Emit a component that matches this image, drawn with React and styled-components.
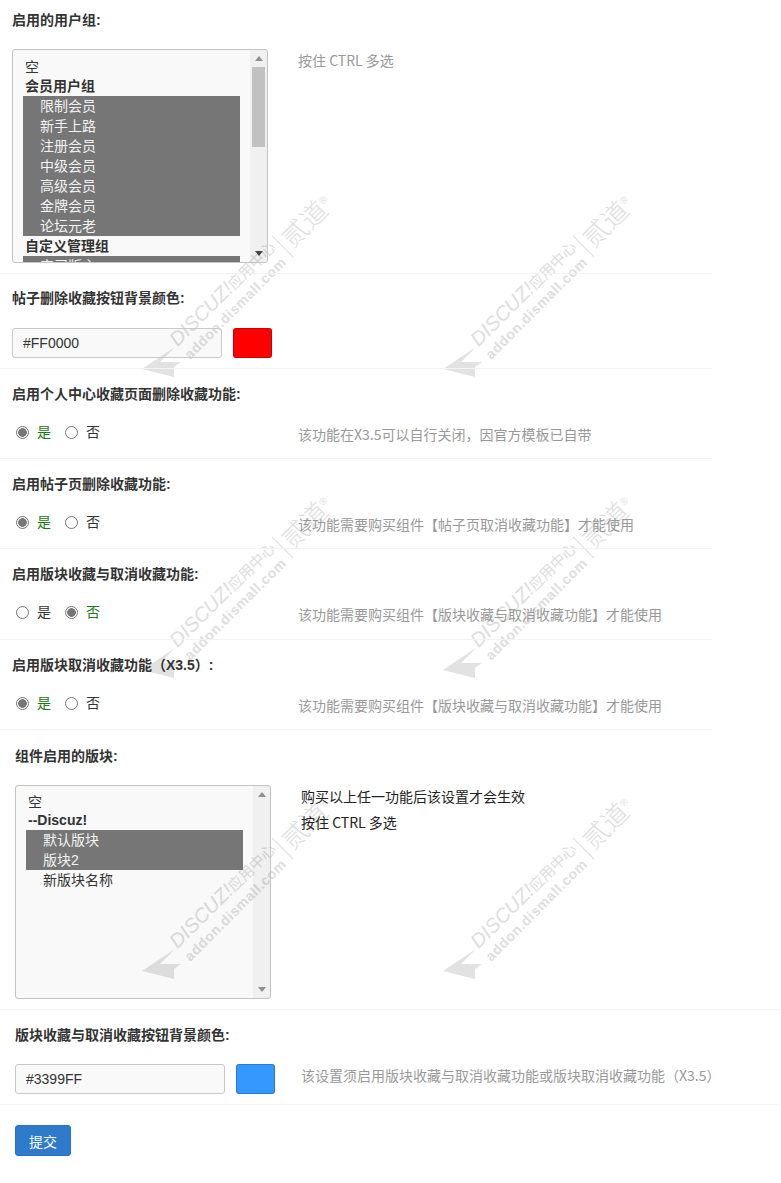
import React from "react";
import styled, { createGlobalStyle } from "styled-components";

const GlobalStyle = createGlobalStyle`
  html, body {
    margin: 0;
    padding: 0;
    background: #fff;
  }
  body {
    font-family: "Liberation Sans", "Noto Sans CJK SC", sans-serif;
    font-size: 14px;
    color: #333;
  }
`;

const Page = styled.div`
  position: relative;
  isolation: isolate;
  width: 781px;
  height: 1183px;
  overflow: hidden;
`;

const Section = styled.section`
  width: ${(props) => (props.$wide ? "100%" : "712px")};
  padding: ${(props) => props.$top ?? 15}px 0 ${(props) => props.$bottom ?? 14}px ${(props) => props.$left ?? 12}px;
  border-bottom: 1px solid #f3f3f3;
  box-sizing: border-box;
`;

const Title = styled.h4`
  margin: 0 0 ${(props) => props.$gap ?? 18}px;
  font-size: 14px;
  line-height: 20px;
  font-weight: 700;
  color: #333;
`;

const Row = styled.div`
  display: grid;
  grid-template-columns: 286px 1fr;
  align-items: start;
`;

const Hint = styled.div`
  font-family: "Noto Sans CJK SC", sans-serif;
  font-size: 14px;
  line-height: 20px;
  color: ${(props) => (props.$dark ? "#222" : "#999")};
  padding-top: ${(props) => props.$offset ?? 0}px;
  white-space: nowrap;
`;

const HintStack = styled.div`
  display: flex;
  flex-direction: column;
  gap: 6px;
  padding-top: 1px;
`;

const ListBox = styled.div`
  display: flex;
  justify-content: space-between;
  width: 256px;
  height: 214px;
  box-sizing: border-box;
  border: 1px solid #c4c4c4;
  border-radius: 3px;
  background: rgba(0, 0, 0, 0.025);
  overflow: hidden;
`;

const Options = styled.div`
  width: 217px;
  padding: ${(props) => props.$padTop}px 0 0 10px;
  color: #333;
`;

const Group = styled.div`
  height: 20px;
  padding-left: 2px;
  line-height: ${(props) => props.$line ?? 20}px;
  font-weight: ${(props) => (props.$bold ? 700 : 400)};
`;

const Option = styled.div`
  height: 20px;
  line-height: 20px;
  padding-left: 17px;
  background: ${(props) => (props.$selected ? "#767676" : "transparent")};
  color: ${(props) => (props.$selected ? "#f2f2f2" : "#333")};
`;

const Scrollbar = styled.div`
  display: flex;
  flex-direction: column;
  align-items: center;
  width: 17px;
  height: 100%;
  background: rgba(0, 0, 0, 0.035);
`;

const ArrowUp = styled.div`
  width: 0;
  height: 0;
  margin: 6px 0 6px;
  border-left: 4px solid transparent;
  border-right: 4px solid transparent;
  border-bottom: 5px solid #8f8f8f;
`;

const ArrowDown = styled.div`
  width: 0;
  height: 0;
  margin: auto 0 6px;
  border-left: 4px solid transparent;
  border-right: 4px solid transparent;
  border-top: 5px solid ${(props) => props.$color ?? "#8f8f8f"};
`;

const Thumb = styled.div`
  width: 13px;
  height: 80px;
  background: #c1c1c1;
`;

const ColorRow = styled.div`
  display: flex;
  align-items: flex-start;
  gap: 11px;
`;

const ColorInput = styled.input`
  width: 210px;
  height: 30px;
  padding: 0 10px;
  box-sizing: border-box;
  border: 1px solid #c9c9c9;
  border-radius: 3px;
  background: rgba(0, 0, 0, 0.025);
  font-family: "Liberation Sans", sans-serif;
  font-size: 14px;
  color: #333;
`;

const Swatch = styled.div`
  width: 39px;
  height: 30px;
  box-sizing: border-box;
  border: 1px solid rgba(0, 0, 0, 0.2);
  border-radius: 3px;
  background: ${(props) => props.color};
`;

const RadioGroup = styled.div`
  display: flex;
  align-items: center;
  height: 20px;
  padding-left: 4px;
`;

const RadioLabel = styled.label`
  display: flex;
  align-items: center;
  gap: 8px;
  margin-right: 14px;
  font-size: 14px;
  line-height: 18px;
  height: 20px;
  color: ${(props) => (props.$checked ? "#1a7a1a" : "#333")};
`;

const RadioInput = styled.input`
  appearance: none;
  width: 13px;
  height: 13px;
  margin: 0;
  border: 1px solid #767676;
  border-radius: 50%;
  background: #fff;
  &:checked {
    background: radial-gradient(circle, #767676 0 4px, #fff 4.6px);
  }
`;

const SubmitButton = styled.button`
  display: block;
  width: 56px;
  height: 31px;
  margin: 20px 0 0 15px;
  border: 1px solid #2a72c0;
  border-radius: 3px;
  background: #2e7bcb;
  color: #fff;
  font-family: "Liberation Sans", "Noto Sans CJK SC", sans-serif;
  font-size: 14px;
`;

const Overlay = styled.div`
  position: absolute;
  z-index: -1;
  top: 190px;
  left: 142px;
  display: grid;
  grid-template-columns: repeat(2, 301px);
  grid-auto-rows: 301px;
  pointer-events: none;
`;

const Tile = styled.div`
  position: relative;
`;

const Plane = styled.svg`
  position: absolute;
  left: 0;
  top: 155px;
`;

const Mark = styled.div`
  position: absolute;
  left: 8px;
  top: 167px;
  width: 270px;
  height: 44px;
  display: flex;
  align-items: center;
  padding-left: 42px;
  box-sizing: border-box;
  color: #dedede;
  transform: rotate(-45deg);
  transform-origin: 0 22px;
`;

const MarkText = styled.div`
  display: flex;
  flex-direction: column;
  line-height: 18px;
`;

const MarkName = styled.div`
  display: flex;
  align-items: baseline;
  white-space: nowrap;
  font-size: 15px;
  & > i {
    font-family: "Liberation Sans", sans-serif;
    font-size: 20px;
  }
`;

const MarkSite = styled.div`
  font-family: "Liberation Sans", sans-serif;
  font-weight: 700;
  font-size: 14px;
  letter-spacing: 0.6px;
  white-space: nowrap;
`;

const MarkRule = styled.div`
  width: 1px;
  height: 30px;
  margin: 0 5px 0 5px;
  background: #dedede;
`;

const MarkBrand = styled.div`
  font-size: 26px;
  line-height: 30px;
  white-space: nowrap;
  font-weight: 300;
`;

const MarkReg = styled.sup`
  font-family: "Liberation Sans", sans-serif;
  font-size: 10px;
  line-height: 0;
`;

function Watermark() {
  return (
    <Overlay>
      {[0, 1, 2, 3, 4, 5].map((n) => (
        <Tile key={n}>
          <Plane width="42" height="34" viewBox="0 0 42 34">
            <polygon points="0,24 33,2 18,17 39,17 32,22 32,32" fill="#e2e2e2" />
          </Plane>
          <Mark>
            <MarkText>
              <MarkName>
                <i>DISCUZ!</i>应用中心
              </MarkName>
              <MarkSite>addon.dismall.com</MarkSite>
            </MarkText>
            <MarkRule />
            <MarkBrand>
              贰道<MarkReg>®</MarkReg>
            </MarkBrand>
          </Mark>
        </Tile>
      ))}
    </Overlay>
  );
}

function ListSelect({ padTop, showThumb, children }) {
  return (
    <ListBox>
      <Options $padTop={padTop}>{children}</Options>
      <Scrollbar>
        <ArrowUp />
        {showThumb && <Thumb />}
        <ArrowDown $color={showThumb ? "#444" : "#8f8f8f"} />
      </Scrollbar>
    </ListBox>
  );
}

function RadioSection({ title, value, hint, bottom }) {
  return (
    <Section $bottom={bottom}>
      <Title>{title}</Title>
      <Row>
        <RadioGroup>
          <RadioLabel $checked={value === "yes"}>
            <RadioInput type="radio" readOnly checked={value === "yes"} />是
          </RadioLabel>
          <RadioLabel $checked={value === "no"}>
            <RadioInput type="radio" readOnly checked={value === "no"} />否
          </RadioLabel>
        </RadioGroup>
        <Hint $offset={2}>{hint}</Hint>
      </Row>
    </Section>
  );
}

const memberGroups = ["限制会员", "新手上路", "注册会员", "中级会员", "高级会员", "金牌会员", "论坛元老"];

export default function App() {
  return (
    <Page>
      <GlobalStyle />
      <Watermark />
      <Section $top={10} $bottom={10}>
        <Title $gap={19}>启用的用户组:</Title>
        <Row>
          <ListSelect padTop={6} showThumb>
            <Group $line={22}>空</Group>
            <Group $bold>会员用户组</Group>
            {memberGroups.map((name) => (
              <Option key={name} $selected>
                {name}
              </Option>
            ))}
            <Group $bold>自定义管理组</Group>
            <Option $selected>实习版主</Option>
          </ListSelect>
          <Hint $offset={1}>按住 CTRL 多选</Hint>
        </Row>
      </Section>
      <Section $top={14} $bottom={10}>
        <Title $gap={20}>帖子删除收藏按钮背景颜色:</Title>
        <ColorRow>
          <ColorInput readOnly value="#FF0000" />
          <Swatch color="#ff0000" />
        </ColorRow>
      </Section>
      <RadioSection title="启用个人中心收藏页面删除收藏功能:" value="yes" hint="该功能在X3.5可以自行关闭，因官方模板已自带" />
      <RadioSection title="启用帖子页删除收藏功能:" value="yes" hint="该功能需要购买组件【帖子页取消收藏功能】才能使用" />
      <RadioSection title="启用版块收藏与取消收藏功能:" value="no" hint="该功能需要购买组件【版块收藏与取消收藏功能】才能使用" bottom={15} />
      <RadioSection title="启用版块取消收藏功能（X3.5）:" value="yes" hint="该功能需要购买组件【版块收藏与取消收藏功能】才能使用" />
      <Section $wide $left={15} $top={16} $bottom={10}>
        <Title $gap={19}>组件启用的版块:</Title>
        <Row>
          <ListSelect padTop={4}>
            <Group $line={24}>空</Group>
            <Group $bold>--Discuz!</Group>
            <Option $selected>默认版块</Option>
            <Option $selected>版块2</Option>
            <Option>新版块名称</Option>
          </ListSelect>
          <HintStack>
            <Hint $dark>购买以上任一功能后该设置才会生效</Hint>
            <Hint $dark>按住 CTRL 多选</Hint>
          </HintStack>
        </Row>
      </Section>
      <Section $wide $left={15} $bottom={10}>
        <Title $gap={19}>版块收藏与取消收藏按钮背景颜色:</Title>
        <Row>
          <ColorRow>
            <ColorInput readOnly value="#3399FF" />
            <Swatch color="#3399ff" />
          </ColorRow>
          <Hint $offset={1}>该设置须启用版块收藏与取消收藏功能或版块取消收藏功能（X3.5）</Hint>
        </Row>
      </Section>
      <SubmitButton type="button">提交</SubmitButton>
    </Page>
  );
}
